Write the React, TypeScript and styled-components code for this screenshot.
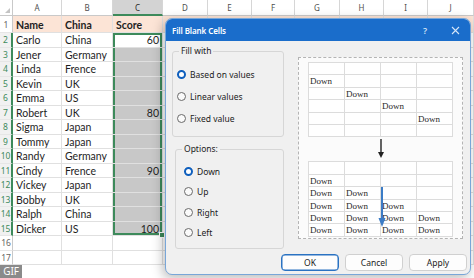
import React from 'react';
import styled, { createGlobalStyle, css } from 'styled-components';

const GlobalStyle = createGlobalStyle`
  html, body {
    margin: 0;
    padding: 0;
    background: #fff;
  }

  body {
    width: 474px;
    height: 278px;
    overflow: hidden;
    position: relative;
  }
`;

const GREEN = '#3d8a5b';
const LINE = '#e0e0e0';

const COLUMNS = ['A', 'B', 'C', 'D', 'E', 'F', 'G', 'H', 'I', 'J'];
const COL_WIDTHS = [13, 49, 51, 50, 45, 44, 43, 45, 44, 44, 46];

const ROWS: [string, string, string][] = [
  ['Name', 'China', 'Score'],
  ['Carlo', 'China', '60'],
  ['Jener', 'Germany', ''],
  ['Linda', 'Frence', ''],
  ['Kevin', 'UK', ''],
  ['Emma', 'US', ''],
  ['Robert', 'UK', '80'],
  ['Sigma', 'Japan', ''],
  ['Tommy', 'Japan', ''],
  ['Randy', 'Germany', ''],
  ['Cindy', 'Frence', '90'],
  ['Vickey', 'Japan', ''],
  ['Bobby', 'UK', ''],
  ['Ralph', 'China', ''],
  ['Dicker', 'US', '100'],
  ['', '', ''],
  ['', '', '']
];

const Page = styled.div`
  position: relative;
  width: 474px;
  height: 278px;
  overflow: hidden;
`;

//* Sheet
const Sheet = styled.div`
  display: grid;
  grid-template-columns: ${COL_WIDTHS.map(w => `${w}px`).join(' ')};
  grid-template-rows: 16px 17px;
  grid-auto-rows: 14.5px;
  font-family: Lato, 'Liberation Sans', sans-serif;
`;

const Corner = styled.div`
  position: relative;
  background: #fff;
  border-right: 1px solid #c9c9c9;
  border-bottom: 1px solid #c9c9c9;
  box-sizing: border-box;

  &::after {
    content: '';
    position: absolute;
    right: 2px;
    bottom: 2px;
    border-left: 5px solid transparent;
    border-bottom: 5px solid #c4c4c4;
  }
`;

const ColHead = styled.div<{ $active?: boolean }>`
  box-sizing: border-box;
  display: flex;
  align-items: center;
  justify-content: center;
  font-family: 'Noto Sans', sans-serif;
  font-size: 8px;
  color: #4f4f4f;
  background: #fff;
  border-right: 1px solid #d6d6d6;
  border-bottom: 1px solid #c9c9c9;

  ${({ $active }) => $active && css`
    background: #d3d3d3;
    color: #2a2a2a;
    border-bottom: 2px solid ${GREEN};
  `}
`;

const RowHead = styled.div<{ $active?: boolean }>`
  box-sizing: border-box;
  display: flex;
  align-items: center;
  justify-content: center;
  font-family: 'Noto Sans', sans-serif;
  font-size: 8.5px;
  color: #666;
  background: #fff;
  border-right: 1px solid #c9c9c9;
  border-bottom: 1px solid #e6e6e6;

  ${({ $active }) => $active && css`
    background: #f1f1f1;
    color: ${GREEN};
    border-right: 2px solid ${GREEN};
  `}
`;

interface ICellProps {
  $bold?: boolean;
  $right?: boolean;
  $peach?: boolean;
  $range?: boolean;
  $active?: boolean;
  $first?: boolean;
  $last?: boolean;
}

const selectionShadow = ({ $first, $last }: ICellProps) => {
  const parts = [`inset 2px 0 0 ${GREEN}`, `inset -2px 0 0 ${GREEN}`];
  if ($first) parts.push(`inset 0 2px 0 ${GREEN}`);
  if ($last) parts.push(`inset 0 -2px 0 ${GREEN}`);
  return parts.join(', ');
};

const Cell = styled.div<ICellProps>`
  position: relative;
  box-sizing: border-box;
  display: flex;
  align-items: center;
  justify-content: ${({ $right }) => ($right ? 'flex-end' : 'flex-start')};
  padding: 1px 3px 0;
  font-size: 10.5px;
  font-weight: ${({ $bold }) => ($bold ? 700 : 400)};
  color: #1e1e1e;
  white-space: nowrap;
  background: ${({ $peach }) => ($peach ? '#fce4d6' : '#fff')};
  border-right: 1px solid ${LINE};
  border-bottom: 1px solid ${LINE};

  ${({ $range, $active }) => $range && !$active && css`
    background: #c8c8c8;
  `}

  ${props => props.$range && css`
    box-shadow: ${selectionShadow(props)};
  `}

  ${({ $last }) => $last && css`
    &::after {
      content: '';
      position: absolute;
      z-index: 2;
      right: -3px;
      bottom: -3px;
      width: 4px;
      height: 4px;
      background: ${GREEN};
      border: 1px solid #fff;
    }
  `}
`;

const GifBadge = styled.div`
  position: absolute;
  left: 0;
  bottom: 0;
  z-index: 3;
  width: 22px;
  height: 13px;
  background: #8a8a8a;
  color: #fff;
  font-family: 'Noto Sans', sans-serif;
  font-size: 10px;
  line-height: 13px;
  text-align: center;
  letter-spacing: -0.2px;
`;

//* Dialog
const Dialog = styled.div`
  position: absolute;
  left: 165px;
  top: 18px;
  z-index: 10;
  width: 306px;
  height: 257px;
  box-sizing: border-box;
  display: flex;
  flex-direction: column;
  overflow: hidden;
  background: #f0f0f0;
  border: 1px solid #78a6d8;
  border-radius: 7px;
  box-shadow: -2px 3px 12px rgba(0, 0, 0, 0.28);
  font-family: 'Noto Sans', sans-serif;
  font-size: 8.5px;
  color: #1b1b1b;
`;

const TitleBar = styled.div`
  flex: none;
  height: 22px;
  display: flex;
  align-items: center;
  padding: 0 4px 0 6px;
  background: #1a6dcb;
  color: #fff;
`;

const Title = styled.span`
  flex: 1;
  font-size: 8px;
  font-weight: 600;
  letter-spacing: -0.1px;
`;

const TitleButton = styled.span`
  width: 22px;
  height: 22px;
  display: flex;
  align-items: center;
  justify-content: center;
  color: #cfe2f7;
  font-size: 9px;
  font-weight: 600;

  & + & {
    margin-left: 8px;
  }
`;

const Body = styled.div`
  display: grid;
  grid-template-columns: 112px 165px;
  column-gap: 14px;
  align-items: start;
  padding: 4px 0 0 6px;
`;

const LeftColumn = styled.div`
  display: flex;
  flex-direction: column;
  gap: 6px;
`;

const Group = styled.fieldset<{ $indent: number; $height: number }>`
  box-sizing: border-box;
  height: ${({ $height }) => $height}px;
  min-width: 0;
  margin: 0 0 0 ${({ $indent }) => $indent}px;
  padding: 0 4px;
  border: 1px solid #d6d6d6;
  border-radius: 3px;
`;

const Legend = styled.legend`
  margin-left: 2px;
  padding: 0 2px;
  font-size: 8.5px;
  line-height: 12px;
  color: #222;
`;

const RadioList = styled.div<{ $pad: number; $row: number }>`
  display: grid;
  grid-auto-rows: ${({ $row }) => $row}px;
  padding: 6px 0 0 ${({ $pad }) => $pad}px;
`;

const RadioRow = styled.label`
  display: flex;
  align-items: center;
  gap: 4px;
  white-space: nowrap;
`;

const RadioDot = styled.span<{ $checked?: boolean }>`
  flex: none;
  width: 9px;
  height: 9px;
  box-sizing: border-box;
  border-radius: 50%;

  ${({ $checked }) => $checked
    ? css`
      background: #fff;
      border: 2.6px solid #0f5fbd;
    `
    : css`
      background: #fafafa;
      border: 1px solid #6a6a6a;
    `}
`;

const Preview = styled.div`
  box-sizing: border-box;
  height: 182px;
  margin-top: 12px;
  padding-top: 4px;
  display: flex;
  flex-direction: column;
  align-items: center;
  background: #fbfbfb;
  border: 1px dashed #b4b4b4;
`;

const MiniGrid = styled.div`
  position: relative;
  display: grid;
  grid-template-columns: repeat(4, 36px);
  grid-auto-rows: 12.4px;
  background: #fff;
  border-top: 1px solid #dcdcdc;
  border-left: 1px solid #dcdcdc;
`;

const MiniCell = styled.div`
  box-sizing: border-box;
  padding: 1px 0 0 1px;
  border-right: 1px solid #dcdcdc;
  border-bottom: 1px solid #dcdcdc;
  font-family: 'Liberation Serif', serif;
  font-size: 9px;
  line-height: 11px;
  color: #2a2a2a;
`;

const ArrowGap = styled.div`
  height: 24px;
  display: flex;
  justify-content: center;
  align-items: center;
`;

const FillArrow = styled.svg`
  position: absolute;
  left: 69px;
  top: 25px;
`;

const Footer = styled.div`
  display: flex;
  justify-content: flex-end;
  gap: 6px;
  padding: 5px 3px 0 0;
`;

const Button = styled.button<{ $primary?: boolean }>`
  width: 58px;
  height: 17px;
  padding: 0;
  font-family: 'Noto Sans', sans-serif;
  font-size: 8.5px;
  color: #1b1b1b;
  background: #fdfdfd;
  border: 1px solid #d0d0d0;
  border-radius: 4px;

  ${({ $primary }) => $primary && css`
    border-color: #2a72c2;
    box-shadow: inset 0 0 0 0.5px #2a72c2;
  `}
`;

const topPreview = [
  [],
  [0],
  [1],
  [2],
  [3],
  []
];

const bottomPreview = [
  [],
  [0],
  [0, 1],
  [0, 1, 2],
  [0, 1, 2, 3],
  [0, 1, 2, 3]
];

const PreviewGrid = ({ rows, children }: { rows: number[][]; children?: React.ReactNode }) => (
  <MiniGrid>
    {rows.map((filled, r) =>
      [0, 1, 2, 3].map(c => <MiniCell key={`${r}-${c}`}>{filled.includes(c) ? 'Down' : ''}</MiniCell>)
    )}
    {children}
  </MiniGrid>
);

const App = () => {
  return (
    <Page>
      <GlobalStyle />
      <Sheet>
        <Corner />
        {COLUMNS.map(col => (
          <ColHead key={col} $active={col === 'C'}>{col}</ColHead>
        ))}
        {ROWS.map((row, i) => {
          const n = i + 1;
          const inRange = n >= 2 && n <= 15;
          return (
            <React.Fragment key={n}>
              <RowHead $active={inRange}>{n}</RowHead>
              {COLUMNS.map((col, c) => {
                const value = c < 3 ? row[c] : '';
                const isC = c === 2;
                return (
                  <Cell
                    key={col}
                    $bold={n === 1}
                    $peach={n === 1}
                    $right={isC && n > 1}
                    $range={isC && inRange}
                    $active={isC && n === 2}
                    $first={isC && n === 2}
                    $last={isC && n === 15}
                  >
                    {value}
                  </Cell>
                );
              })}
            </React.Fragment>
          );
        })}
      </Sheet>

      <GifBadge>GIF</GifBadge>

      <Dialog>
        <TitleBar>
          <Title>Fill Blank Cells</Title>
          <TitleButton>?</TitleButton>
          <TitleButton>
            <svg width="9" height="9" viewBox="0 0 9 9">
              <path d="M1 1 L8 8 M8 1 L1 8" stroke="#d4e5f8" strokeWidth="1.1" />
            </svg>
          </TitleButton>
        </TitleBar>

        <Body>
          <LeftColumn>
            <Group $indent={0} $height={92}>
              <Legend>Fill with</Legend>
              <RadioList $pad={0} $row={22}>
                <RadioRow><RadioDot $checked />Based on values</RadioRow>
                <RadioRow><RadioDot />Linear values</RadioRow>
                <RadioRow><RadioDot />Fixed value</RadioRow>
              </RadioList>
            </Group>
            <Group $indent={3} $height={106}>
              <Legend>Options:</Legend>
              <RadioList $pad={4} $row={20.5}>
                <RadioRow><RadioDot $checked />Down</RadioRow>
                <RadioRow><RadioDot />Up</RadioRow>
                <RadioRow><RadioDot />Right</RadioRow>
                <RadioRow><RadioDot />Left</RadioRow>
              </RadioList>
            </Group>
          </LeftColumn>

          <Preview>
            <PreviewGrid rows={topPreview} />
            <ArrowGap>
              <svg width="8" height="22" viewBox="0 0 8 22">
                <path d="M4 1 V16" stroke="#222" strokeWidth="1.4" />
                <path d="M1 14 L4 20 L7 14 Z" fill="#222" />
              </svg>
            </ArrowGap>
            <PreviewGrid rows={bottomPreview}>
              <FillArrow width="8" height="41" viewBox="0 0 8 41">
                <path d="M4 0 V34" stroke="#3b7cc6" strokeWidth="2" />
                <path d="M0.5 31 L4 40 L7.5 31 Z" fill="#3b7cc6" />
              </FillArrow>
            </PreviewGrid>
          </Preview>
        </Body>

        <Footer>
          <Button $primary>OK</Button>
          <Button>Cancel</Button>
          <Button>Apply</Button>
        </Footer>
      </Dialog>
    </Page>
  );
};

export default App;
